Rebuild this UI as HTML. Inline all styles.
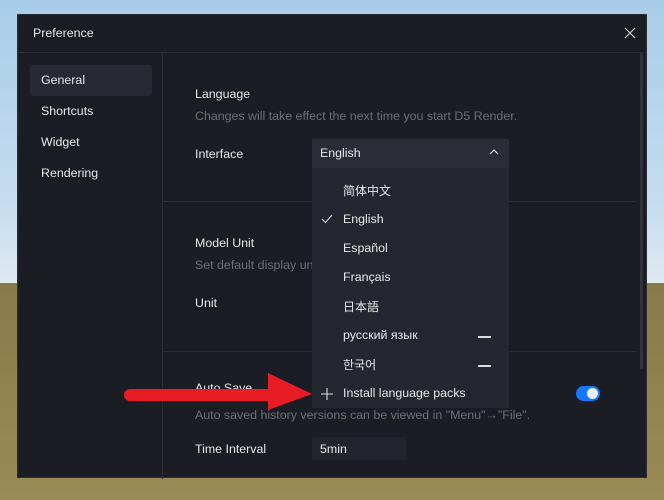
<!DOCTYPE html>
<html><head><meta charset="utf-8"><style>
*{margin:0;padding:0;box-sizing:border-box}
body{width:664px;height:500px;overflow:hidden;position:relative;font-family:"Liberation Sans","Noto Sans CJK SC",sans-serif;
background:linear-gradient(#a9cce8 0%,#c4dcef 40%,#dde9f2 56%,#e4ecf0 56.6%,#8a7a4a 56.6%,#9a8a55 100%)}
.dlg{position:absolute;left:17px;top:14px;width:630px;height:464px;background:#1b1d24;border:1px solid #2c2f38}
.t{position:absolute;color:#e8e8ea;font-size:12.4px;white-space:nowrap}
.g{color:#6c6f78}
.c{font-size:12px;margin-top:-2px}
.a{position:absolute}
</style></head><body>
<div class="dlg">
 <div class="t" style="left:15px;top:11px">Preference</div>
 <svg class="a" style="left:606px;top:12px" width="12" height="12"><path d="M1 1L11 11M11 1L1 11" stroke="#ccc" stroke-width="1.2"/></svg>
 <div class="a" style="left:0;top:37px;width:628px;height:1px;background:#2a2d35"></div>
 <div class="a" style="left:144px;top:38px;width:1px;height:426px;background:#2a2d35"></div>
 <div class="a" style="left:12px;top:50px;width:122px;height:31px;background:#272a33;border-radius:3px"></div>
 <div class="t" style="left:23px;top:58px">General</div>
 <div class="t" style="left:23px;top:89px">Shortcuts</div>
 <div class="t" style="left:23px;top:120px">Widget</div>
 <div class="t" style="left:23px;top:151px">Rendering</div>
 <div class="a" style="left:145px;top:186px;width:473px;height:1px;background:#2a2d35"></div>
 <div class="a" style="left:145px;top:336px;width:473px;height:1px;background:#2a2d35"></div>
 <div class="a" style="left:622px;top:38px;width:3px;height:316px;background:#30333b;border-radius:2px"></div>
 <div class="t" style="left:177px;top:72px">Language</div>
 <div class="t g" style="left:177px;top:94px">Changes will take effect the next time you start D5 Render.</div>
 <div class="t" style="left:177px;top:132px">Interface</div>
 <div class="t" style="left:177px;top:221px">Model Unit</div>
 <div class="t g" style="left:177px;top:243px">Set default display unit</div>
 <div class="t" style="left:177px;top:281px">Unit</div>
 <div class="t" style="left:177px;top:366px">Auto Save</div>
 <div class="t g" style="left:177px;top:393px">Auto saved history versions can be viewed in "Menu"→"File".</div>
 <div class="t" style="left:177px;top:427px">Time Interval</div>
 <div class="a" style="left:294px;top:422px;width:94px;height:23px;background:#22252d;border-radius:2px"></div>
 <div class="t" style="left:302px;top:427px">5min</div>
 <div class="a" style="left:558px;top:371px;width:24px;height:15px;background:#1677ff;border-radius:8px"><div class="a" style="left:11px;top:2px;width:11px;height:11px;border-radius:50%;background:#e8f0ff"></div></div>
</div>
<div class="a" style="left:312px;top:139px;width:197px;height:29px;background:#2a2d35;border-radius:2px 2px 0 0"></div>
<div class="t" style="left:320px;top:146px">English</div>
<svg class="a" style="left:489px;top:149px" width="10" height="6"><path d="M1 5L5 1L9 5" stroke="#ddd" fill="none" stroke-width="1.2"/></svg>
<div class="a" style="left:312px;top:168px;width:197px;height:240px;background:#24272f"></div>
<div class="t c" style="left:343px;top:184px">简体中文</div>
<svg class="a" style="left:321px;top:214px" width="12" height="10"><path d="M1 5L4.5 8.5L11 1" stroke="#ddd" fill="none" stroke-width="1.1"/></svg>
<div class="t" style="left:343px;top:212px">English</div>
<div class="t" style="left:343px;top:241px">Español</div>
<div class="t" style="left:343px;top:270px">Français</div>
<div class="t c" style="left:343px;top:300px">日本語</div>
<div class="t" style="left:343px;top:328px">русский язык</div>
<div class="a" style="left:478px;top:336px;width:13px;height:1.5px;background:#ddd"></div>
<div class="t c" style="left:343px;top:358px">한국어</div>
<div class="a" style="left:478px;top:365px;width:13px;height:1.5px;background:#ddd"></div>
<svg class="a" style="left:321px;top:388px" width="12" height="12"><path d="M6 0V12M0 6H12" stroke="#ddd" stroke-width="1.1"/></svg>
<div class="t" style="left:343px;top:386px">Install language packs</div>
<svg class="a" style="left:0;top:0" width="664" height="500"><path d="M130 389H268V373L312 394L268 410V401H130A6 6 0 0 1 130 389Z" fill="#e81c24"/></svg>
</body></html>
